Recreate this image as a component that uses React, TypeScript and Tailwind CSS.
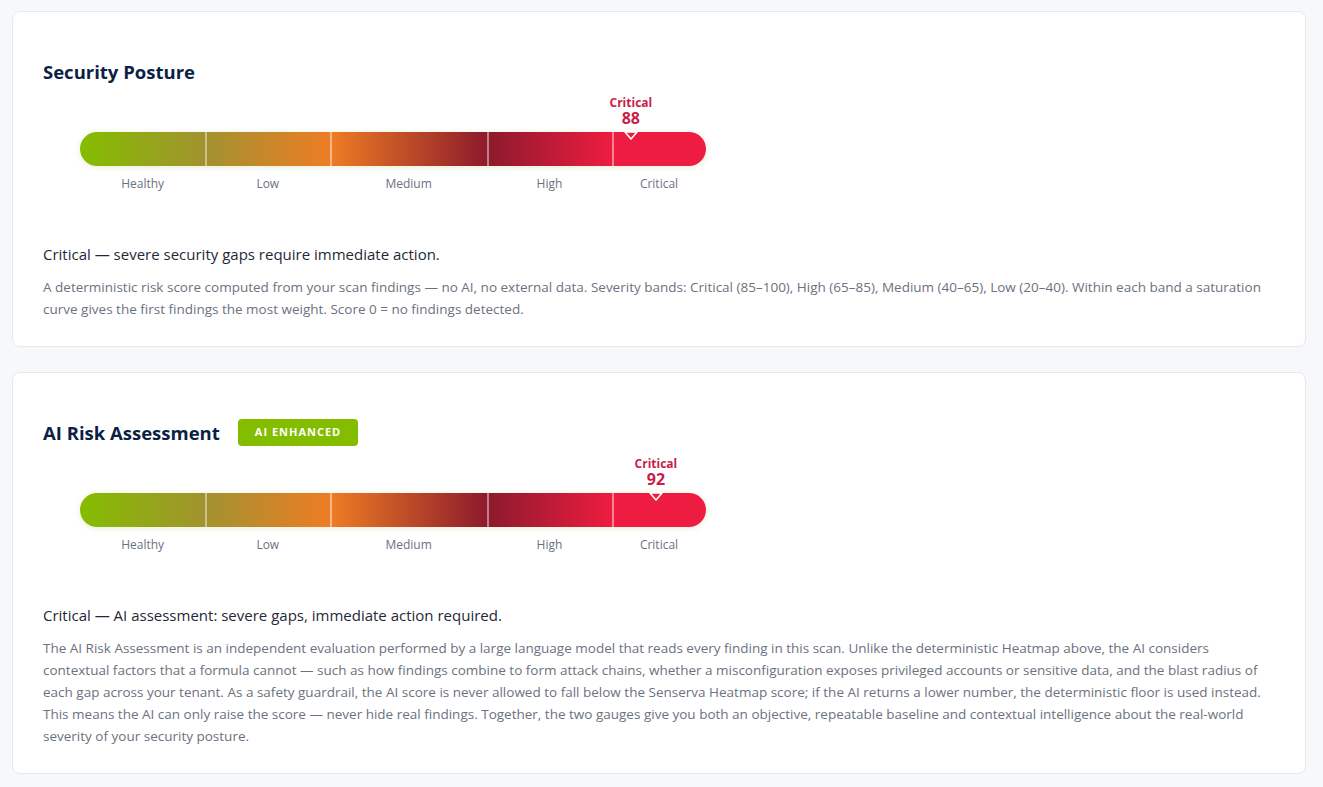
import React from "react";

const bands = [
  { label: "Healthy", w: "w-[20%]" },
  { label: "Low", w: "w-[20%]" },
  { label: "Medium", w: "w-[25%]" },
  { label: "High", w: "w-[20%]" },
  { label: "Critical", w: "w-[15%]" },
];

const Gauge = ({ score }: { score: number }) => {
  return (
    <div className="ml-[37px] w-[626px]">
      {/* bar */}
      <div className="relative h-[34px] rounded-full bg-[linear-gradient(90deg,#84bd00_0%,#a2922f_20%,#ee7c24_40%,#8c1a2c_65%,#ee1c40_85%,#ee1c40_100%)] shadow-[0_1px_6px_rgba(132,150,0,0.18)]">
        <div className="absolute inset-y-0 left-[20%] w-[2px] bg-white/45" />
        <div className="absolute inset-y-0 left-[40%] w-[2px] bg-white/45" />
        <div className="absolute inset-y-0 left-[65%] w-[2px] bg-white/45" />
        <div className="absolute inset-y-0 left-[85%] w-[2px] bg-white/45" />

        {/* marker */}
        <div
          className="absolute bottom-full flex -translate-x-1/2 flex-col items-center pb-[6px] font-bold text-[#c81e4a]"
          style={{ left: `${score}%` }}
        >
          <span className="text-[12px] leading-[14px]">Critical</span>
          <span className="text-[16px] leading-[16px]">{score}</span>
        </div>
        <svg
          className="absolute top-[-1px] -translate-x-1/2"
          style={{ left: `${score}%` }}
          width="16"
          height="10"
          viewBox="0 0 16 10"
        >
          <path d="M2 1 L14 1 L8 8 Z" fill="#ee1c40" stroke="#fff" strokeWidth="1.6" strokeLinejoin="round" />
        </svg>
      </div>

      {/* labels */}
      <div className="mt-[10px] flex text-[12px] leading-4 text-[#6b7280]">
        {bands.map((b) => (
          <div key={b.label} className={`${b.w} text-center`}>
            {b.label}
          </div>
        ))}
      </div>
    </div>
  );
};

const Card = ({
  title,
  badge,
  score,
  summary,
  body,
}: {
  title: string;
  badge?: string;
  score: number;
  summary: string;
  body: string;
}) => {
  return (
    <div className="rounded-lg border border-[#e5e8ee] bg-white px-[30px] pt-[46px] pb-[26px]">
      <div className="flex h-[27px] items-center gap-[18px]">
        <h2 className="text-[18.5px] font-bold leading-[27px] text-[#0c1f45]">{title}</h2>
        {badge && (
          <span className="flex h-[27px] items-center rounded-[4px] bg-[#84bd00] px-[17px] text-[11px] font-bold tracking-[1px] text-white">
            {badge}
          </span>
        )}
      </div>

      <div className="pt-[47px]">
        <Gauge score={score} />
      </div>

      <p className="mt-[52px] text-[15px] leading-5 text-[#1f2937]">{summary}</p>
      <p className="mt-[12px] text-[13.5px] leading-[22px] text-[#6b7280]">{body}</p>
    </div>
  );
};

export default function App() {
  return (
    <div className="min-h-screen bg-[#f6f8fa] pt-[11px] pl-3 pr-[17px] pb-4 font-['Open_Sans','Noto_Sans',sans-serif]">
      <div className="flex flex-col gap-[25px]">
        <Card
          title="Security Posture"
          score={88}
          summary="Critical — severe security gaps require immediate action."
          body="A deterministic risk score computed from your scan findings — no AI, no external data. Severity bands: Critical (85–100), High (65–85), Medium (40–65), Low (20–40). Within each band a saturation curve gives the first findings the most weight. Score 0 = no findings detected."
        />
        <Card
          title="AI Risk Assessment"
          badge="AI ENHANCED"
          score={92}
          summary="Critical — AI assessment: severe gaps, immediate action required."
          body="The AI Risk Assessment is an independent evaluation performed by a large language model that reads every finding in this scan. Unlike the deterministic Heatmap above, the AI considers contextual factors that a formula cannot — such as how findings combine to form attack chains, whether a misconfiguration exposes privileged accounts or sensitive data, and the blast radius of each gap across your tenant. As a safety guardrail, the AI score is never allowed to fall below the Senserva Heatmap score; if the AI returns a lower number, the deterministic floor is used instead. This means the AI can only raise the score — never hide real findings. Together, the two gauges give you both an objective, repeatable baseline and contextual intelligence about the real-world severity of your security posture."
        />
      </div>
    </div>
  );
}
